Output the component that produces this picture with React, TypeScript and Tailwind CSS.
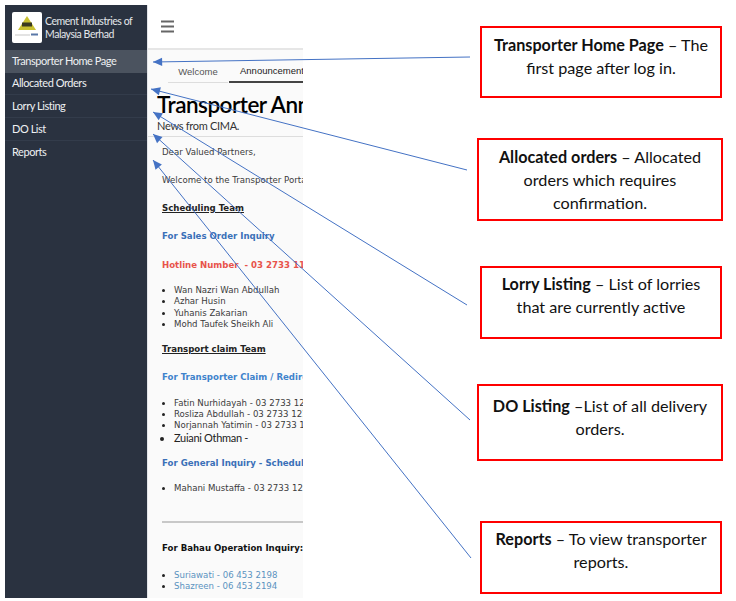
// Annotated walkthrough of the transporter portal home page

const menu = ['Transporter Home Page', 'Allocated Orders', 'Lorry Listing', 'DO List', 'Reports'];

const arrows = [
  { x1: 470, y1: 57, x2: 153, y2: 62 },
  { x1: 467, y1: 170, x2: 151, y2: 89 },
  { x1: 467, y1: 305, x2: 153, y2: 112 },
  { x1: 470, y1: 420, x2: 153, y2: 134 },
  { x1: 471, y1: 558, x2: 153, y2: 160 },
];

function Arrow({ x1, y1, x2, y2 }: { x1: number; y1: number; x2: number; y2: number }) {
  const angle = Math.atan2(y1 - y2, x1 - x2);
  const len = 10;
  const spread = 0.42;
  const p1 = `${x2 + len * Math.cos(angle + spread)},${y2 + len * Math.sin(angle + spread)}`;
  const p2 = `${x2 + len * Math.cos(angle - spread)},${y2 + len * Math.sin(angle - spread)}`;
  return (
    <g>
      <line x1={x1} y1={y1} x2={x2} y2={y2} stroke="#4472c4" strokeWidth="1" />
      <polygon points={`${x2},${y2} ${p1} ${p2}`} fill="#4472c4" />
    </g>
  );
}

function Logo() {
  return (
    <div className="flex h-[31px] w-[30px] shrink-0 items-center justify-center rounded-[2px] bg-white">
      <svg width="28" height="29" viewBox="0 0 28 29">
        <polygon points="14,3 23,17 5,17" fill="#c8c030" />
        <rect x="9" y="9.5" width="10" height="4" fill="#3a3a20" />
        <rect x="2" y="21.5" width="15" height="1" fill="#c8c8c8" />
        <rect x="18" y="20.5" width="7" height="2" fill="#5a78a8" />
      </svg>
    </div>
  );
}

function Sidebar() {
  return (
    <div className="flex w-[142px] shrink-0 flex-col bg-[#2a3240] font-['Lato',sans-serif] text-[11px] tracking-[-0.45px] text-[#eef0f2]">
      <div className="flex h-[45px] items-center gap-[3px] pl-[7px]">
        <Logo />
        <div className="text-[10.5px] leading-[12.5px] text-[#e4e7ea]">
          Cement Industries of
          <br />
          Malaysia Berhad
        </div>
      </div>
      {menu.map((item, i) => (
        <div
          key={item}
          className={`flex h-[22.7px] items-center pl-[7px] ${i === 0 ? 'bg-[#4b535f]' : ''} ${i > 0 && i < 4 ? 'border-b border-[#333c4b]' : ''}`}
        >
          {item}
        </div>
      ))}
    </div>
  );
}

function Bullets({ items, className = '' }: { items: string[]; className?: string }) {
  return (
    <ul className={`list-disc pl-[12px] leading-[11.4px] marker:text-[#222] ${className}`}>
      {items.map((item) => (
        <li key={item} className={item.startsWith('Zuiani') ? "font-['Lato',sans-serif] text-[11px] tracking-[-0.3px] text-[#222]" : ''}>
          {item}
        </li>
      ))}
    </ul>
  );
}

function Content() {
  return (
    <div className="flex min-w-0 flex-1 flex-col overflow-hidden whitespace-nowrap bg-[#fafafa]">
      <div className="flex h-[45px] shrink-0 items-center border-b-2 border-[#e6e6e6] bg-white pl-[13px]">
        <svg width="14" height="13" viewBox="0 0 14 13">
          <rect x="0" y="0.5" width="13" height="2" fill="#666" />
          <rect x="0" y="5.5" width="13" height="2" fill="#666" />
          <rect x="0" y="10.5" width="13" height="2" fill="#666" />
        </svg>
      </div>

      <div className="mt-[12px] flex h-[21px] shrink-0 pl-[20px] font-['Liberation_Sans',sans-serif] text-[9.5px]">
        <div className="flex w-[60px] shrink-0 items-center justify-center border-b border-[#ddd] text-[#555]">Welcome</div>
        <div className="ml-[1px] flex flex-1 items-center border-b-2 border-[#444] pl-[11px] font-medium text-[#222]">
          Announcements
        </div>
      </div>

      <div className="mt-[8px] pl-[9px] text-[#000]">
        <div className="h-[28px] font-['Lato',sans-serif] text-[22.5px] font-semibold leading-[27px] tracking-[-0.5px]">Transporter Announcements</div>
        <div className="h-[16px] font-['Lato',sans-serif] text-[11px] leading-[13px] tracking-[-0.3px] text-[#333]">News from CIMA.</div>
      </div>
      <div className="mt-[1px] h-px shrink-0 bg-[#ddd]" />

      <div className="pl-[14px] font-['DejaVu_Sans',sans-serif] text-[8.6px] text-[#3a3a3a]">
        <div className="mt-[9px] h-[28px] leading-[12px]">Dear Valued Partners,</div>
        <div className="h-[28px] leading-[12px]">Welcome to the Transporter Portal</div>
        <div className="h-[28px] font-bold leading-[12px] text-[#222] underline">Scheduling Team</div>
        <div className="h-[29px] font-bold leading-[12px] text-[#3a70b8]">For Sales Order Inquiry</div>
        <div className="h-[26px] font-bold leading-[12px] text-[#e8534a]">Hotline Number&nbsp; - 03 2733 1188</div>
        <Bullets items={['Wan Nazri Wan Abdullah', 'Azhar Husin', 'Yuhanis Zakarian', 'Mohd Taufek Sheikh Ali']} />
        <div className="mt-[12px] h-[28px] font-bold leading-[12px] text-[#222] underline">Transport claim Team</div>
        <div className="h-[27px] font-bold leading-[12px] text-[#3f83cc]">For Transporter Claim / Redirect</div>
        <Bullets
          items={[
            'Fatin Nurhidayah - 03 2733 1210',
            'Rosliza Abdullah - 03 2733 1211',
            'Norjannah Yatimin - 03 2733 1212',
            'Zuiani Othman -',
          ]}
        />
        <div className="mt-[14px] h-[26px] font-bold leading-[12px] text-[#3a70b8]">For General Inquiry - Scheduling</div>
        <Bullets items={['Mahani Mustaffa - 03 2733 1213']} />
        <div className="mt-[26px] h-[2px] bg-[#c8c8c8]" />
        <div className="mt-[19px] h-[28px] font-bold leading-[12px] text-[#111]">For Bahau Operation Inquiry:</div>
        <Bullets className="text-[#5b93c0]" items={['Suriawati - 06 453 2198', 'Shazreen - 06 453 2194']} />
      </div>
    </div>
  );
}

function Callout({ className, children }: { className: string; children: React.ReactNode }) {
  return (
    <div className={`border-[2px] border-[#ff0000] px-[8px] text-center text-[16.2px] leading-[23px] text-[#111] ${className}`}>
      {children}
    </div>
  );
}

export default function App() {
  return (
    <div className="relative flex h-[601px] w-[736px] overflow-hidden bg-white pb-[3px] pl-[5px] pt-[5px] font-['Lato',sans-serif]">
      <div className="flex w-[298px] shrink-0">
        <Sidebar />
        <div className="w-px shrink-0 bg-[#e2e4e8]" />
        <Content />
      </div>

      <div className="ml-[174px] flex w-[245px] flex-col pt-[21px]">
        <Callout className="ml-[3px] h-[72px] pt-[5px]">
          <b>Transporter Home Page</b> – The first page after log in.
        </Callout>
        <Callout className="mt-[40px] h-[83px] w-[246px] pt-[5px]">
          <b>Allocated orders</b> – Allocated orders which requires confirmation.
        </Callout>
        <Callout className="ml-[3px] mt-[45px] h-[73px] pt-[4px]">
          <b>Lorry Listing</b> – List of lorries that are currently active
        </Callout>
        <Callout className="mt-[45px] h-[77px] w-[246px] pt-[8px]">
          <b>DO Listing</b> –List of all delivery orders.
        </Callout>
        <Callout className="ml-[3px] mt-[60px] h-[73px] pt-[4px]">
          <b>Reports</b> – To view transporter reports.
        </Callout>
      </div>

      {/* Pointers from the notes to the menu */}
      <svg className="pointer-events-none absolute left-0 top-0" width="736" height="601">
        {arrows.map((a) => (
          <Arrow key={a.y1} {...a} />
        ))}
      </svg>
    </div>
  );
}
